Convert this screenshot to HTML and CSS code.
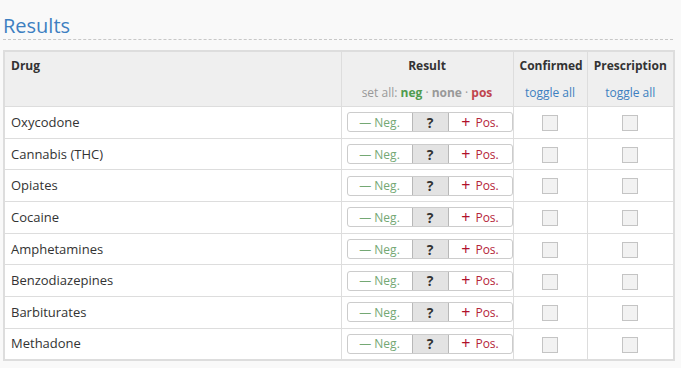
FILE: index.html
```html
<!DOCTYPE html>
<html>
<head>
<meta charset="utf-8">
<link rel="stylesheet" href="styles.css">
</head>
<body>
<h2 class="title">Results</h2>
<table class="results">
  <colgroup>
    <col class="w-drug"><col class="w-result"><col class="w-conf"><col class="w-presc">
  </colgroup>
  <thead>
    <tr>
      <th class="c-drug">Drug</th>
      <th class="c-center">Result<div class="sub">set all: <span class="neg">neg</span> · <span class="none">none</span> · <span class="pos">pos</span></div></th>
      <th class="c-center">Confirmed<div class="sub"><a class="link">toggle all</a></div></th>
      <th class="c-center">Prescription<div class="sub"><a class="link">toggle all</a></div></th>
    </tr>
  </thead>
  <tbody>
    <tr><td>Oxycodone</td><td class="res"><div class="seg"><span class="b-neg">— Neg.</span><span class="b-q">?</span><span class="b-pos"><b>+</b> Pos.</span></div></td><td class="mid"><span class="cb"></span></td><td class="mid"><span class="cb"></span></td></tr>
    <tr><td>Cannabis (THC)</td><td class="res"><div class="seg"><span class="b-neg">— Neg.</span><span class="b-q">?</span><span class="b-pos"><b>+</b> Pos.</span></div></td><td class="mid"><span class="cb"></span></td><td class="mid"><span class="cb"></span></td></tr>
    <tr><td>Opiates</td><td class="res"><div class="seg"><span class="b-neg">— Neg.</span><span class="b-q">?</span><span class="b-pos"><b>+</b> Pos.</span></div></td><td class="mid"><span class="cb"></span></td><td class="mid"><span class="cb"></span></td></tr>
    <tr><td>Cocaine</td><td class="res"><div class="seg"><span class="b-neg">— Neg.</span><span class="b-q">?</span><span class="b-pos"><b>+</b> Pos.</span></div></td><td class="mid"><span class="cb"></span></td><td class="mid"><span class="cb"></span></td></tr>
    <tr><td>Amphetamines</td><td class="res"><div class="seg"><span class="b-neg">— Neg.</span><span class="b-q">?</span><span class="b-pos"><b>+</b> Pos.</span></div></td><td class="mid"><span class="cb"></span></td><td class="mid"><span class="cb"></span></td></tr>
    <tr><td>Benzodiazepines</td><td class="res"><div class="seg"><span class="b-neg">— Neg.</span><span class="b-q">?</span><span class="b-pos"><b>+</b> Pos.</span></div></td><td class="mid"><span class="cb"></span></td><td class="mid"><span class="cb"></span></td></tr>
    <tr><td>Barbiturates</td><td class="res"><div class="seg"><span class="b-neg">— Neg.</span><span class="b-q">?</span><span class="b-pos"><b>+</b> Pos.</span></div></td><td class="mid"><span class="cb"></span></td><td class="mid"><span class="cb"></span></td></tr>
    <tr><td>Methadone</td><td class="res"><div class="seg"><span class="b-neg">— Neg.</span><span class="b-q">?</span><span class="b-pos"><b>+</b> Pos.</span></div></td><td class="mid"><span class="cb"></span></td><td class="mid"><span class="cb"></span></td></tr>
  </tbody>
</table>
</body>
</html>
```
FILE: styles.css
```css
html, body { margin: 0; padding: 0; }
body {
  background: #f9f9f9;
  font-family: "Open Sans", "Noto Sans", sans-serif;
  font-size: 13px;
  color: #333;
  padding: 0 8px 0 3px;
}
.title {
  margin: 0;
  padding-top: 13px;
  font-size: 20px;
  font-weight: 400;
  color: #3d7fc1;
  line-height: 26px;
  border-bottom: 1px dashed #c8c8c8;
  padding-bottom: 0;
}
.results {
  margin-top: 10px;
  width: 670px;
  table-layout: fixed;
  border-collapse: collapse;
  border: 2px solid #dddddd;
  background: #fff;
}
.w-drug { width: 337px; }
.w-result { width: 172px; }
.w-conf { width: 74px; }
.w-presc { width: 87px; }
.results th, .results td {
  border: 1px solid #dddddd;
}
.results thead th {
  background: #efefef;
  font-weight: 700;
  font-size: 12px;
  vertical-align: top;
  padding: 5px 6px 5px 6px;
  line-height: 17px;
}
.c-drug { text-align: left; }
.c-center { text-align: center; }
.sub {
  font-weight: 400;
  font-size: 12px;
  margin-top: 10px;
  line-height: 17px;
  color: #999;
}
.sub .neg { color: #4e9c4e; font-weight: 700; }
.sub .none { color: #999; font-weight: 700; }
.sub .pos { color: #c0454e; font-weight: 700; }
.link { color: #3d7fc1; }
.results tbody td {
  height: 31.7px;
  padding: 0 6px;
  box-sizing: border-box;
  line-height: 17px;
}
.results tbody td.mid { text-align: center; padding: 0; }
.results tbody td.res { text-align: left; padding: 0 0 0 5px; }
.seg {
  display: inline-flex;
  height: 20px;
  box-sizing: border-box;
  border: 1px solid #cccccc;
  border-radius: 3px;
  overflow: hidden;
  font-size: 12px;
  vertical-align: middle;
  background: #fff;
}
.seg span {
  display: flex;
  align-items: center;
  justify-content: center;
}
.b-neg { width: 64px; color: #74a874; }
.b-q {
  width: 35px;
  background: #e3e3e3;
  border-left: 1px solid #b8b8b8;
  border-right: 1px solid #b8b8b8;
  color: #333;
  font-weight: 700;
  font-size: 14px;
}
.b-pos { width: 63px; color: #b5253a; }
.b-pos b { font-weight: 400; font-size: 16px; margin-right: 5px; color: #b0102a; }
.cb {
  display: inline-block;
  width: 16px;
  height: 16px;
  box-sizing: border-box;
  border: 1px solid #c4c4c4;
  background: #f2f2f2;
  vertical-align: middle;
}
```
